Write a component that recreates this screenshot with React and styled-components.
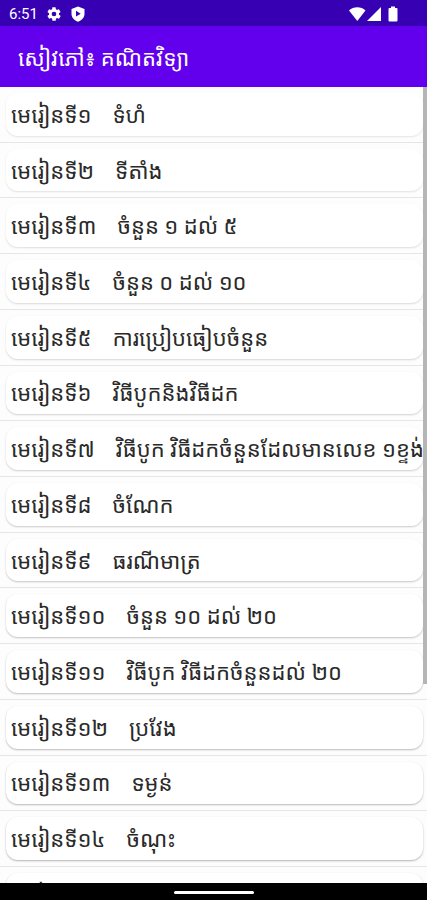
import React from 'react'
import styled, { createGlobalStyle } from 'styled-components'

const lessons = [
    { label: 'មេរៀនទី១', title: 'ទំហំ' },
    { label: 'មេរៀនទី២', title: 'ទីតាំង' },
    { label: 'មេរៀនទី៣', title: 'ចំនួន ១ ដល់ ៥' },
    { label: 'មេរៀនទី៤', title: 'ចំនួន ០ ដល់ ១០' },
    { label: 'មេរៀនទី៥', title: 'ការប្រៀបធៀបចំនួន' },
    { label: 'មេរៀនទី៦', title: 'វិធីបូកនិងវិធីដក' },
    { label: 'មេរៀនទី៧', title: 'វិធីបូក វិធីដកចំនួនដែលមានលេខ ១ខ្ទង់' },
    { label: 'មេរៀនទី៨', title: 'ចំណែក' },
    { label: 'មេរៀនទី៩', title: 'ធរណីមាត្រ' },
    { label: 'មេរៀនទី១០', title: 'ចំនួន ១០ ដល់ ២០' },
    { label: 'មេរៀនទី១១', title: 'វិធីបូក វិធីដកចំនួនដល់ ២០' },
    { label: 'មេរៀនទី១២', title: 'ប្រវែង' },
    { label: 'មេរៀនទី១៣', title: 'ទម្ងន់' },
    { label: 'មេរៀនទី១៤', title: 'ចំណុះ' },
    { label: 'មេរៀនទី១៥', title: '' }
]

const GearIcon = () => (
    <svg width="16" height="16" viewBox="0 0 24 24" fill="#fff" aria-hidden="true">
        <path fillRule="evenodd" d="M19.4 13c.1-.3.1-.7.1-1s0-.7-.1-1l2.1-1.7c.2-.1.3-.4.1-.6l-2-3.5c-.1-.2-.4-.3-.6-.2l-2.5 1c-.5-.4-1.1-.7-1.7-1l-.4-2.6c0-.2-.2-.4-.5-.4h-4c-.2 0-.5.2-.5.4L9.2 5c-.6.3-1.2.6-1.7 1L5 5c-.2-.1-.5 0-.6.2l-2 3.5c-.1.2-.1.5.1.6L4.6 11c-.1.3-.1.7-.1 1s0 .7.1 1l-2.1 1.7c-.2.1-.3.4-.1.6l2 3.5c.1.2.4.3.6.2l2.5-1c.5.4 1.1.7 1.7 1l.4 2.6c0 .2.2.4.5.4h4c.2 0 .5-.2.5-.4l.4-2.6c.6-.3 1.2-.6 1.7-1l2.5 1c.2.1.5 0 .6-.2l2-3.5c.1-.2.1-.5-.1-.6zM12 15.5a3.5 3.5 0 1 1 0-7 3.5 3.5 0 0 1 0 7z" />
    </svg>
)

const ShieldIcon = () => (
    <svg width="16" height="16" viewBox="0 0 16 16" fill="#fff" aria-hidden="true">
        <path fillRule="evenodd" d="M8 .5l6.5 2.5v5c0 3.6-3 6.5-6.5 7.7-3.5-1.2-6.5-4.1-6.5-7.7V3zM6 4.8v5.8l4.7-2.9z" />
    </svg>
)

const SignalIcons = () => (
    <svg width="50" height="16" viewBox="0 0 50 16" fill="#fff" aria-hidden="true">
        <path d="M0 4.5C4.5 .2 12 .2 16.5 4.5L8.3 15z" />
        <path d="M32 1v14H18z" />
        <path d="M42 .5h4v1.5h1.5q1 0 1 1v11.5q0 1-1 1h-7q-1 0-1-1V3q0-1 1-1h1.5z" />
    </svg>
)

const App = () => (
    <Screen>
        <GlobalStyle />
        <StatusBar>
            <Clock>6:51</Clock>
            <GearIcon />
            <ShieldIcon />
            <StatusRight>
                <SignalIcons />
            </StatusRight>
        </StatusBar>
        <AppBar>
            <AppTitle>សៀវភៅ៖ គណិតវិទ្យា</AppTitle>
        </AppBar>
        <ListArea>
            <LessonList>
                {lessons.map((lesson, index) => (
                    <LessonRow key={lesson.label}>
                        {/* shadows get stronger the lower the card is on the screen */}
                        <LessonCard $shade={0.1 + index * 0.015}>
                            <span>{lesson.label}</span>
                            <span>{lesson.title}</span>
                        </LessonCard>
                    </LessonRow>
                ))}
            </LessonList>
            <ScrollThumb />
        </ListArea>
        <NavBar>
            <HomeHandle />
        </NavBar>
    </Screen>
)

export default App

const GlobalStyle = createGlobalStyle`
* {
    box-sizing: border-box;
}

body {
    margin: 0;
    background-color: #fdfdfd;
    font-family: Roboto, "Noto Sans Khmer", "Noto Sans", sans-serif;
}
`

const Screen = styled.div`
display: flex;
flex-direction: column;
height: 100vh;
`

const StatusBar = styled.div`
display: flex;
align-items: center;
flex: 0 0 26px;
gap: 8px;
padding: 2px 28px 0 9px;
background-color: #3700b3;
color: white;
`

const Clock = styled.span`
font-size: 15px;
line-height: 20px;
`

const StatusRight = styled.div`
display: flex;
margin-left: auto;
`

const AppBar = styled.header`
display: flex;
align-items: center;
flex: 0 0 61px;
padding: 4px 18px 0;
background-color: #6200ee;
color: white;
`

const AppTitle = styled.h1`
margin: 0;
font-size: 22px;
font-weight: 400;
line-height: 32px;
white-space: nowrap;
`

const ListArea = styled.main`
position: relative;
flex: 1;
min-height: 0;
`

const LessonList = styled.ul`
display: flex;
flex-direction: column;
height: 100%;
margin: 0;
padding: 0;
overflow: hidden;
list-style-type: none;
`

const LessonRow = styled.li`
display: flex;
flex: 0 0 7%;
padding: 6px 4px 6px 6px;
border-bottom: 1px solid #e6e6e6;
`

const LessonCard = styled.div`
display: flex;
align-items: center;
flex: 1;
gap: 21px;
min-width: 0;
padding: 3px 0 0 5px;
border-radius: 12px;
background-color: white;
box-shadow: 0 1px 2px 0 rgba(0,0,0,${props => props.$shade});
color: #2a2a2a;
font-size: 22px;
font-weight: 400;
line-height: 32px;
white-space: nowrap;
`

const ScrollThumb = styled.div`
position: absolute;
top: 0;
right: 0;
width: 4px;
height: 75%;
background-color: #b5b5b5;
`

const NavBar = styled.footer`
display: flex;
align-items: center;
justify-content: center;
flex: 0 0 17px;
padding-top: 2px;
background-color: black;
`

const HomeHandle = styled.div`
width: 80px;
height: 3px;
border-radius: 2px;
background-color: white;
`
